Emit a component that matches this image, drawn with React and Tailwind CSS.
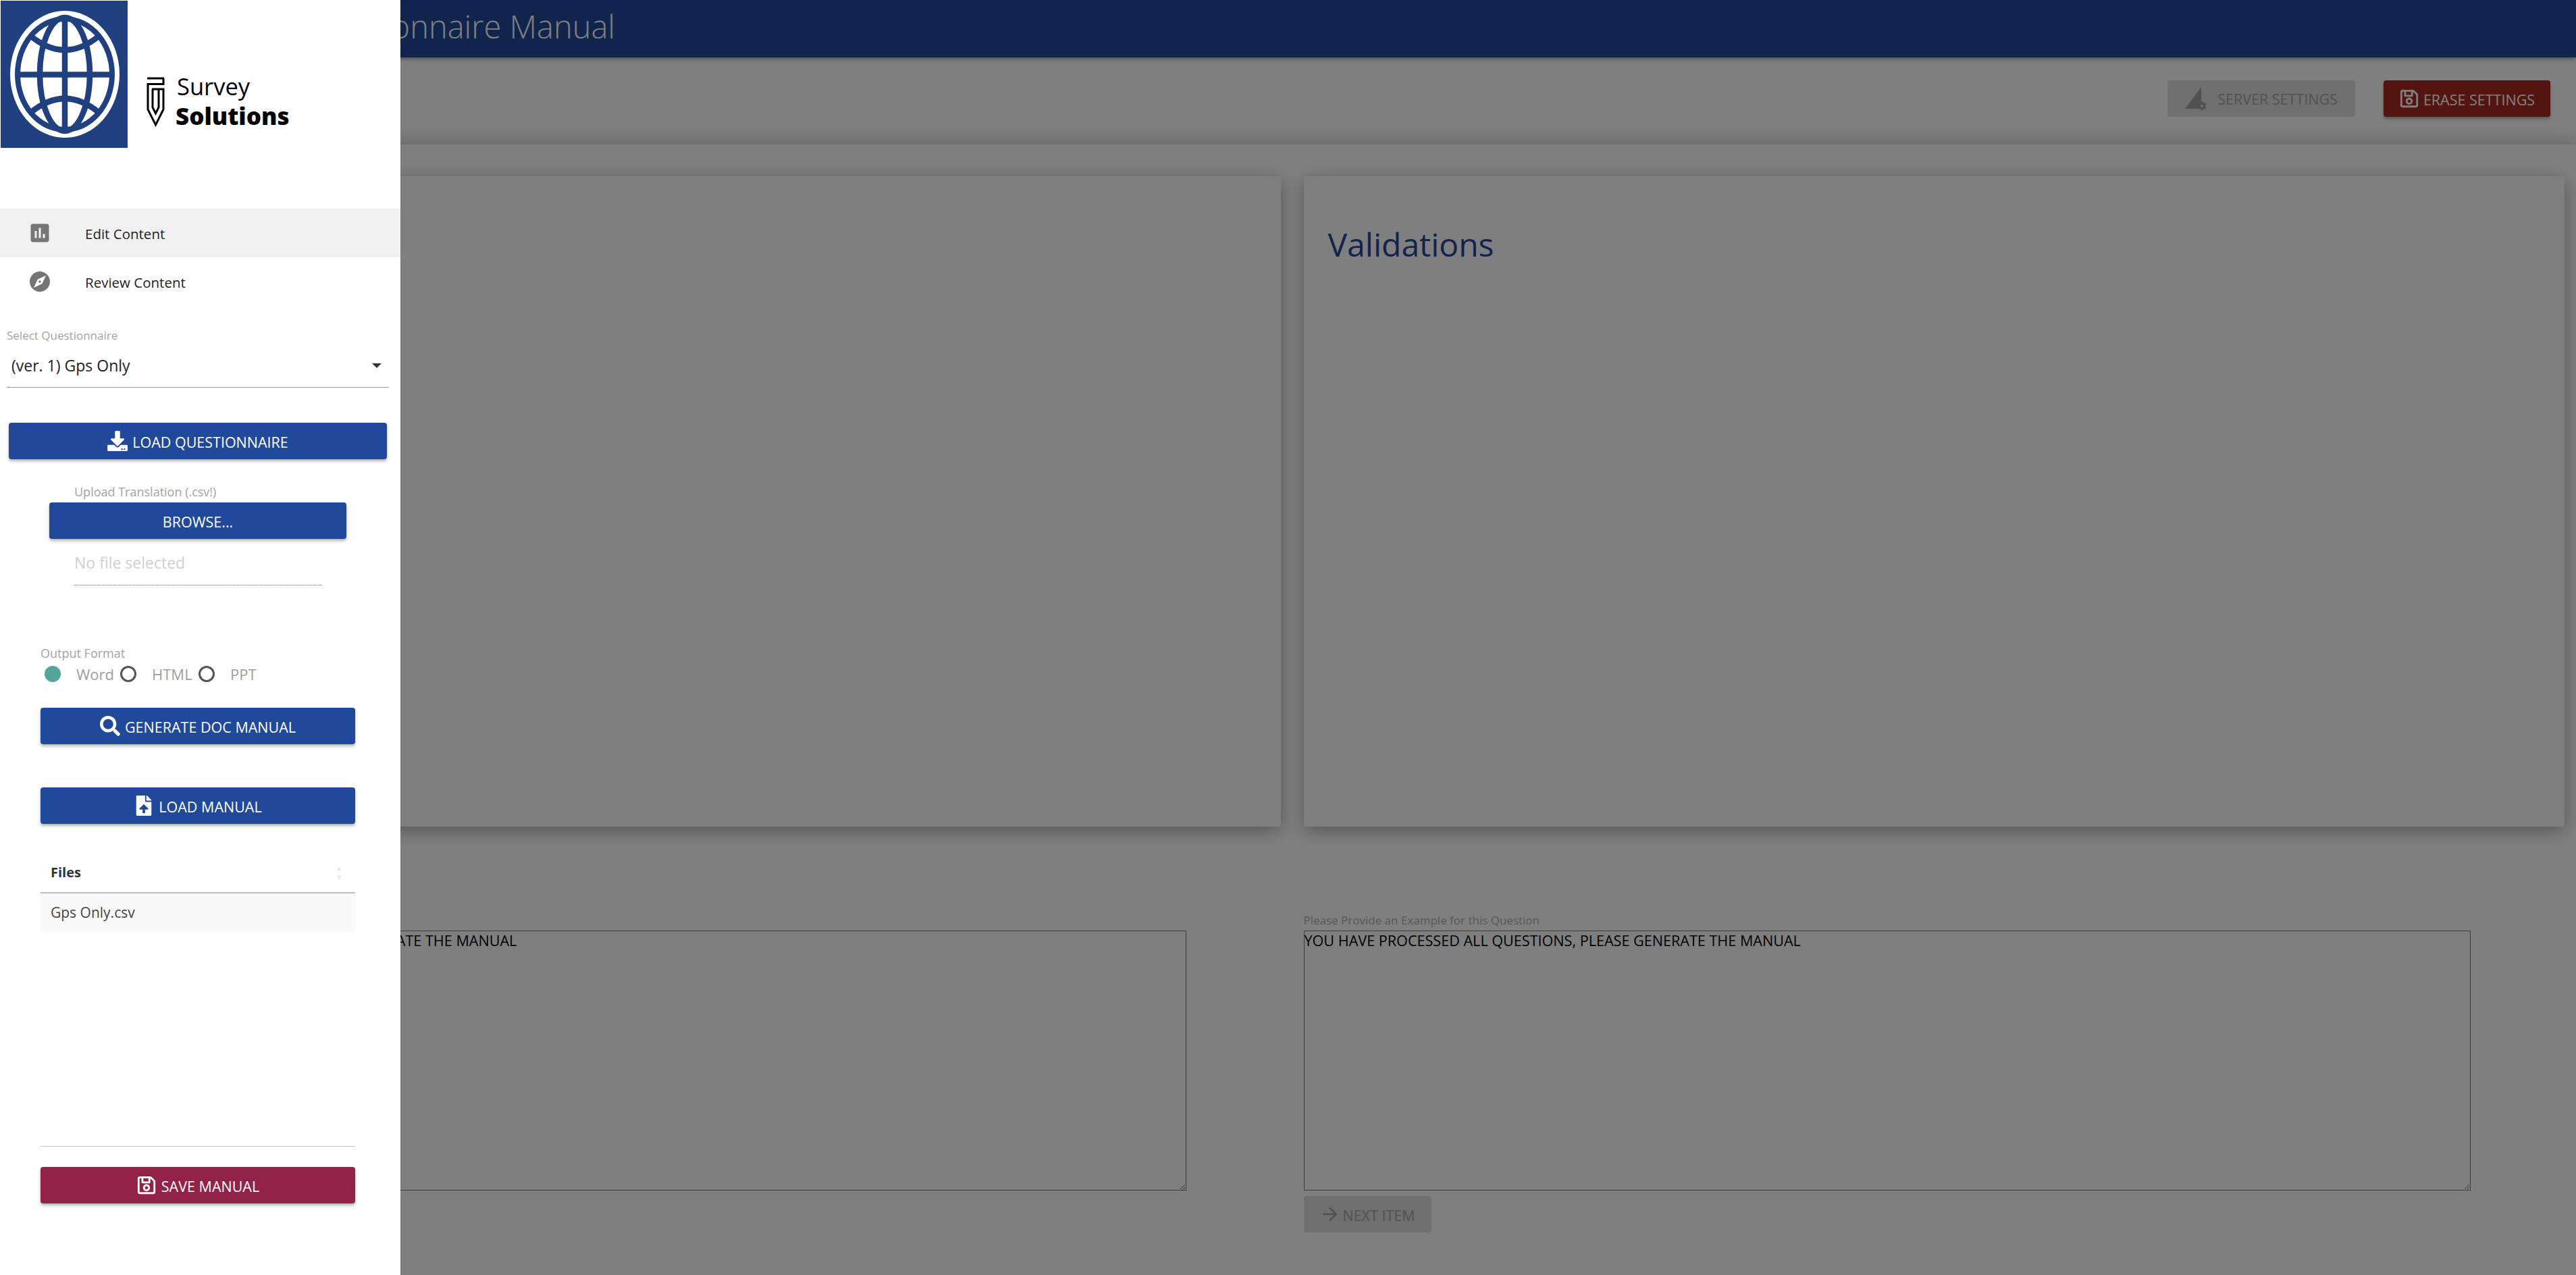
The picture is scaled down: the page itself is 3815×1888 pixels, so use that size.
import React from 'react';
import { FaDownload, FaSearch, FaFileUpload, FaRegSave, FaCog } from 'react-icons/fa';
import { MdAssessment, MdExplore, MdArrowForward } from 'react-icons/md';

const FONT = "font-['Open_Sans','Noto_Sans',sans-serif]";

const WorldBankLogo = () => (
    <svg width="188" height="218" viewBox="0 0 188 218" className="block">
        <rect width="188" height="218" fill="#20407f" />
        <ellipse cx="95" cy="109" rx="81" ry="94" fill="#fff" />
        <ellipse cx="95" cy="109" rx="74" ry="86" fill="#20407f" />
        <ellipse cx="95" cy="109" rx="66" ry="78" fill="#fff" />
        <g fill="none" stroke="#20407f" strokeWidth="8.5">
            <path d="M95 25V193" />
            <path d="M25 109.5H165" />
            <ellipse cx="95" cy="109" rx="37" ry="84" />
            <path d="M44 52Q95 94 146 52" />
            <path d="M44 166Q95 124 146 166" />
        </g>
    </svg>
);

const SurveySolutionsLogo = () => (
    <div className="flex items-start mt-[112px] ml-[28px]">
        <svg width="27" height="75" viewBox="0 0 27 75" className="mt-px" fill="none" stroke="#000" strokeWidth="3">
            <path d="M1 2H26" />
            <path d="M25 2V10.5H2V48L13.5 71L25 48V18H8" />
            <path d="M9 18V45L13.5 54L18 45V18" />
        </svg>
        <div className="ml-[18px] text-black">
            <div className="text-[34.5px] leading-[38px] -mt-[4px]">Survey</div>
            <div className="text-[35px] leading-[38px] font-extrabold -ml-[2px] mt-[6px]">Solutions</div>
        </div>
    </div>
);

const Button = ({ icon, children, className }) => (
    <button className={`h-[54px] rounded-[4px] bg-[#21499b] text-white text-[21.5px] uppercase flex items-center justify-center gap-[7px] shadow-[0_3px_4px_rgba(0,0,0,0.3)] ${className}`}>
        {icon}
        <span className="pt-[5px]">{children}</span>
    </button>
);

const Radio = ({ checked, label, labelWidth }) => (
    <div className="flex items-center">
        {checked ? (
            <span className="w-[24px] h-[24px] rounded-full bg-[#54a59a]" />
        ) : (
            <span className="w-[24px] h-[24px] rounded-full border-[3px] border-[#555555]" />
        )}
        <span className="ml-[23px] text-[22px] leading-[24px] text-[#9e9e9e]" style={{ width: labelWidth }}>{label}</span>
    </div>
);

const Sidebar = () => (
    <aside className="absolute left-0 top-0 z-20 w-[593px] h-[1888px] bg-white">
        <div className="h-[309px] flex items-start pt-px pl-px">
            <WorldBankLogo />
            <SurveySolutionsLogo />
        </div>

        <div className="h-[72px] bg-[#f1f1f1] flex items-center">
            <MdAssessment size={36} className="ml-[41px] text-[#757575]" />
            <span className="ml-[49px] pt-[2px] text-[20.5px] text-[#222222]">Edit Content</span>
        </div>
        <div className="h-[72px] flex items-center">
            <MdExplore size={36} className="ml-[41px] text-[#757575]" />
            <span className="ml-[49px] pt-[2px] text-[20.5px] text-[#222222]">Review Content</span>
        </div>

        <div className="mt-[32px] ml-[10px] mr-[17px]">
            <div className="h-[24px] text-[17px] leading-[24px] text-[#a3a3a3]">Select Questionnaire</div>
            <div className="h-[65px] flex items-center justify-between border-b border-[#999999] pl-[7px] pr-[11px]">
                <span className="text-[23px] text-[#222222]">(ver. 1) Gps Only</span>
                <span className="w-0 h-0 border-x-[7px] border-x-transparent border-t-[7px] border-t-[#333333]" />
            </div>
        </div>

        <Button icon={<FaDownload size={30} />} className="mt-[52px] ml-[13px] w-[560px]">Load Questionnaire</Button>

        <div className="mt-[36px] ml-[110px] h-[24px] text-[18px] leading-[24px] text-[#a3a3a3]">Upload Translation (.csv!)</div>
        <Button className="mt-[4px] ml-[73px] w-[440px]">Browse...</Button>
        <div className="ml-[110px] w-[366px] h-[69px] pt-[2px] flex items-center border-b border-dotted border-[#777777] text-[23px] text-[#cfcfcf]">No file selected</div>

        <div className="mt-[88px] ml-[60px] h-[24px] text-[18px] leading-[24px] text-[#a3a3a3]">Output Format</div>
        <div className="mt-[7px] ml-[66px] h-[24px] flex">
            <Radio checked label="Word" labelWidth={65} />
            <Radio label="HTML" labelWidth={69} />
            <Radio label="PPT" labelWidth={40} />
        </div>

        <Button icon={<FaSearch size={30} />} className="mt-[38px] ml-[60px] w-[466px]">Generate Doc Manual</Button>
        <Button icon={<FaFileUpload size={30} />} className="mt-[64px] ml-[60px] w-[466px]">Load Manual</Button>

        <div className="mt-[43px] ml-[60px] w-[466px]">
            <div className="h-[60px] flex items-center justify-between border-b-2 border-[#bdbdbd] px-[15px] text-[#333333]">
                <span className="text-[20px] font-bold">Files</span>
                <span className="flex flex-col text-[9px] leading-[13px] text-[#e4e4e4] mr-[4px]">
                    <span>▲</span>
                    <span>▼</span>
                </span>
            </div>
            <div className="h-[57px] flex items-center px-[15px] bg-[#f9f9f9] rounded-b-[4px] text-[21px] text-[#444444]">Gps Only.csv</div>
            <div className="mt-[317px] border-t border-[#c4c4c4]" />
            <Button icon={<FaRegSave size={30} />} className="mt-[30px] w-[466px] !bg-[#922247]">Save Manual</Button>
        </div>
    </aside>
);

const PROCESSED = 'YOU HAVE PROCESSED ALL QUESTIONS, PLEASE GENERATE THE MANUAL';

const ExampleColumn = ({ label, withNext }) => (
    <div>
        <div className="mt-[129px] h-[20px] text-[17px] leading-[20px] text-[#b0b0b0]">{label}</div>
        <textarea
            readOnly
            defaultValue={PROCESSED}
            className="block mt-[5px] w-[1728px] h-[385px] border border-[#767676] text-[21.6px] leading-[28px] text-black pt-0 outline-none"
        />
        {withNext && (
            <button className="mt-[8px] w-[189px] h-[54px] rounded-[4px] bg-[#dedede] text-[#a3a3a3] text-[21.5px] flex items-center justify-center gap-[2px]">
                <MdArrowForward size={32} />
                <span className="pt-[5px]">NEXT ITEM</span>
            </button>
        )}
    </div>
);

export default function App() {
    return (
        <div className={`relative w-[3815px] h-[1888px] overflow-hidden bg-white ${FONT}`}>
            <header className="relative z-10 h-[85px] bg-[#21499b] shadow-[0_2px_6px_rgba(0,0,0,0.4)] flex items-center">
                <h1 className="w-[911px] text-right text-[47px] font-light text-white -mt-[6px]">Questionnaire Manual</h1>
            </header>

            <div className="h-[129px] flex justify-end items-start gap-[42px] pt-[34px] pr-[38px]">
                <button className="w-[278px] h-[54px] rounded-[4px] bg-[#e0e0e0] text-[#a3a3a3] text-[21.5px] flex items-center justify-center gap-[18px]">
                    <span className="relative w-[30px] h-[34px]">
                        <svg width="30" height="34" viewBox="0 0 30 34" className="text-[#a3a3a3]">
                            <path d="M24 0V24H22V32H0Z" fill="currentColor" />
                        </svg>
                        <FaCog size={14} className="absolute left-[18px] top-[21px] text-[#a3a3a3]" />
                    </span>
                    <span className="pt-[2px]">SERVER SETTINGS</span>
                </button>
                <button className="w-[247px] h-[54px] rounded-[4px] bg-[#a8281e] text-white text-[21.5px] flex items-center justify-center gap-[6px] shadow-[0_3px_4px_rgba(0,0,0,0.3)]">
                    <FaRegSave size={30} />
                    <span className="pt-[5px]">ERASE SETTINGS</span>
                </button>
            </div>

            <main className="h-[1674px] pt-[47px] pl-[29px] pr-[17px] shadow-[0_-4px_24px_rgba(0,0,0,0.22)]">
                <div className="grid grid-cols-2 gap-x-[34px]">
                    <section className="h-[963px] rounded-[3px] bg-white shadow-[0_6px_26px_rgba(0,0,0,0.32)]" />
                    <section className="h-[963px] rounded-[3px] bg-white shadow-[0_6px_26px_rgba(0,0,0,0.32)] px-[36px] pt-[64px]">
                        <h2 className="text-[48px] leading-[74px] text-[#21499b]">Validations</h2>
                    </section>
                    <ExampleColumn label="" />
                    <ExampleColumn label="Please Provide an Example for this Question" withNext />
                </div>
            </main>

            <div className="absolute inset-0 z-10 bg-black/50" />
            <Sidebar />
        </div>
    );
}
